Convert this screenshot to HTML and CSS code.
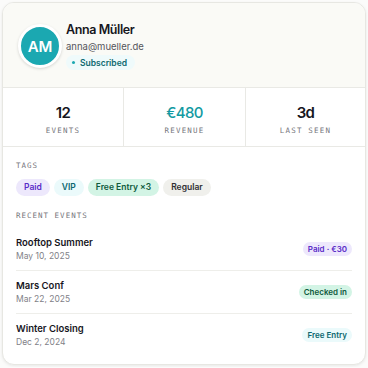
FILE: index.html
```html
<!DOCTYPE html>
<html lang="de">
<head>
    <meta charset="UTF-8">
    <meta name="viewport" content="width=device-width, initial-scale=1.0">
    <title>Anna Müller</title>
    <link rel="stylesheet" href="styles.css">
</head>
<body>
    <div class="card">
        <!-- Kopf -->
        <div class="header">
            <div class="avatar">AM</div>
            <div class="who">
                <div class="name">Anna Müller</div>
                <div class="email">anna@mueller.de</div>
                <span class="subscribed"><i class="dot"></i>Subscribed</span>
            </div>
        </div>

        <!-- Kennzahlen -->
        <div class="stats">
            <div class="stat">
                <div class="value">12</div>
                <div class="label">EVENTS</div>
            </div>
            <div class="stat">
                <div class="value teal">€480</div>
                <div class="label">REVENUE</div>
            </div>
            <div class="stat">
                <div class="value">3d</div>
                <div class="label">LAST SEEN</div>
            </div>
        </div>

        <div class="body">
            <div class="section-title">TAGS</div>
            <div class="tags">
                <span class="chip purple">Paid</span>
                <span class="chip cyan">VIP</span>
                <span class="chip green">Free Entry ×3</span>
                <span class="chip grey">Regular</span>
            </div>

            <div class="section-title recent">RECENT EVENTS</div>
            <ul class="events">
                <li>
                    <div>
                        <div class="ev-name">Rooftop Summer</div>
                        <div class="ev-date">May 10, 2025</div>
                    </div>
                    <span class="pill purple">Paid · €30</span>
                </li>
                <li>
                    <div>
                        <div class="ev-name">Mars Conf</div>
                        <div class="ev-date">Mar 22, 2025</div>
                    </div>
                    <span class="pill green">Checked in</span>
                </li>
                <li>
                    <div>
                        <div class="ev-name">Winter Closing</div>
                        <div class="ev-date">Dec 2, 2024</div>
                    </div>
                    <span class="pill cyan">Free Entry</span>
                </li>
            </ul>
        </div>
    </div>
</body>
</html>
```

FILE: styles.css
```css
body {
    margin: 0;
    padding: 2px;
    background: #fbfbfa;
    font-family: Inter, "Noto Sans", sans-serif;
    color: #16161d;
}
.card {
    width: 362px;
    height: 361px;
    background: white;
    border: 1px solid #e7e7e2;
    border-radius: 12px;
    box-shadow: 0 1px 3px rgba(0, 0, 0, 0.08);
    overflow: hidden;
}
.header {
    display: flex;
    align-items: flex-start;
    gap: 4px;
    background: #fafaf6;
    height: 85px;
    padding: 17px 15px 0 15px;
    box-sizing: border-box;
    border-bottom: 1px solid #e9e9e5;
}
.avatar {
    width: 38px;
    height: 38px;
    border-radius: 50%;
    background: #1ba8b1;
    color: white;
    font-size: 15px;
    font-weight: 600;
    display: flex;
    align-items: center;
    justify-content: center;
    border: 3px solid white;
    box-shadow: 0 1px 3px rgba(0, 0, 0, 0.15);
    margin-top: 4px;
}
.who {
    display: flex;
    flex-direction: column;
    align-items: flex-start;
}
.name {
    font-size: 12.5px;
    font-weight: 600;
    letter-spacing: -0.4px;
    line-height: 18px;
    margin-top: 1px;
}
.email {
    font-size: 9.5px;
    color: #55555c;
    margin-top: 1px;
    line-height: 14px;
}
.subscribed {
    display: inline-flex;
    align-items: center;
    gap: 5px;
    margin-top: 1px;
    background: #effafb;
    color: #0d6970;
    font-size: 8.5px;
    font-weight: 600;
    padding: 0 8px 0 6px;
    height: 15px;
    border-radius: 8px;
}
.dot {
    width: 3px;
    height: 3px;
    border-radius: 50%;
    background: #1ba8b1;
}
.stats {
    display: grid;
    grid-template-columns: 120px 122px 1fr;
    height: 58px;
    border-bottom: 1px solid #e9e9e5;
}
.stat {
    display: flex;
    flex-direction: column;
    align-items: center;
    justify-content: center;
    padding-top: 4px;
}
.stat + .stat {
    border-left: 1px solid #e9e9e5;
}
.value {
    font-size: 15px;
    font-weight: 600;
    letter-spacing: -0.6px;
    line-height: 20px;
}
.value.teal {
    color: #139aa2;
    font-weight: 500;
}
.label {
    font-family: "DejaVu Sans Mono", monospace;
    font-size: 7.5px;
    letter-spacing: 1.2px;
    color: #76767c;
    margin-top: 3px;
}
.body {
    padding: 14px 13px 0 13px;
}
.section-title {
    font-family: "DejaVu Sans Mono", monospace;
    font-size: 7.5px;
    letter-spacing: 1px;
    color: #76767c;
    line-height: 10px;
}
.section-title.recent {
    margin-top: 15px;
}
.tags {
    display: flex;
    gap: 4px;
    margin-top: 8px;
}
.chip {
    font-size: 8.5px;
    font-weight: 600;
    height: 17px;
    line-height: 17px;
    padding: 0 8px;
    border-radius: 9px;
}
.purple { background: #ede8fc; color: #5a2bc8; }
.cyan { background: #ebfafb; color: #0c6870; }
.green { background: #d3f4e5; color: #0f5a3d; }
.grey { background: #f0f0ec; color: #2f2f33; }
.events {
    list-style-type: none;
    padding: 0;
    margin: 7px 0 0 0;
}
.events li {
    display: flex;
    align-items: center;
    justify-content: space-between;
    height: 42px;
    border-bottom: 1px solid #eeeeea;
}
.events li:last-child {
    border-bottom: none;
}
.ev-name {
    font-size: 9.5px;
    font-weight: 600;
    line-height: 13px;
}
.ev-date {
    font-size: 8.5px;
    color: #818187;
    line-height: 12px;
    margin-top: 1px;
}
.pill {
    font-size: 8px;
    font-weight: 600;
    height: 14px;
    line-height: 14px;
    padding: 0 5px;
    border-radius: 7px;
}
```
